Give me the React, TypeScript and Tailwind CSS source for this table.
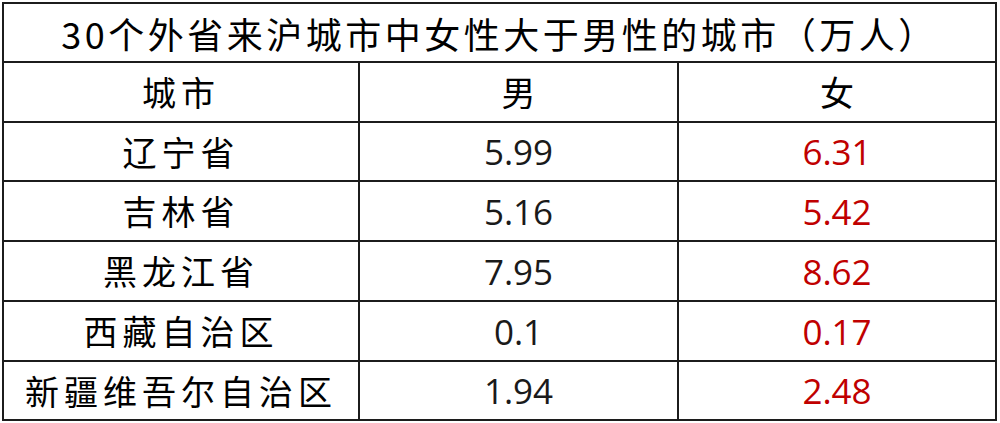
import React from "react";

const rows = [
  { city: "辽宁省", m: "5.99", f: "6.31", h: "h-[59px]" },
  { city: "吉林省", m: "5.16", f: "5.42", h: "h-[60px]" },
  { city: "黑龙江省", m: "7.95", f: "8.62", h: "h-[60px]" },
  { city: "西藏自治区", m: "0.1", f: "0.17", h: "h-[60px]" },
  { city: "新疆维吾尔自治区", m: "1.94", f: "2.48", h: "h-[57px]" },
];

const cjk = { fontFamily: '"Noto Sans CJK SC", "Noto Sans", sans-serif' };
const num = { fontFamily: '"Open Sans", "Noto Sans", sans-serif' };

export default function App() {
  return (
    <div className="w-[1000px] h-[423px] bg-white pt-[2px] pl-[2px]">
      <div className="w-[995px] border-2 border-[#1c1c1c] text-black">
        <div
          className="h-[59px] flex items-center justify-center border-b-2 border-[#1c1c1c] text-[36px] tracking-[3.5px] leading-none"
          style={cjk}
        >
          30个外省来沪城市中女性大于男性的城市（万人）
        </div>
        <div className="grid grid-cols-[356px_319px_1fr] h-[60px] border-b-2 border-[#1c1c1c] text-[34px] leading-none" style={cjk}>
          <div className="flex items-center justify-center border-r-2 border-[#1c1c1c] tracking-[5px]">城市</div>
          <div className="flex items-center justify-center border-r-2 border-[#1c1c1c]">男</div>
          <div className="flex items-center justify-center">女</div>
        </div>
        {rows.map((r, i) => (
          <div
            key={r.city}
            className={`grid grid-cols-[356px_319px_1fr] ${r.h} ${i < rows.length - 1 ? "border-b-2 border-[#1c1c1c]" : ""}`}
          >
            <div className="flex items-center justify-center border-r-2 border-[#1c1c1c] text-[34px] leading-none tracking-[5px]" style={cjk}>
              {r.city}
            </div>
            <div className="flex items-center justify-center border-r-2 border-[#1c1c1c] text-[35px] leading-none text-[#1a1a1a]" style={num}>
              {r.m}
            </div>
            <div className="flex items-center justify-center text-[35px] leading-none text-[#c00000]" style={num}>
              {r.f}
            </div>
          </div>
        ))}
      </div>
    </div>
  );
}
